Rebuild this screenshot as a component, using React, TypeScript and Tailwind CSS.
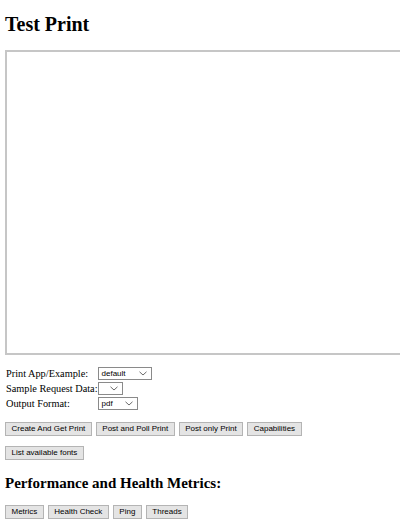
import React from 'react';

const serif = "font-['Liberation_Serif',serif]";

function Btn({ children }: { children: React.ReactNode }) {
  return (
    <button
      type="button"
      className="h-[14px] px-[5.5px] bg-[#e4e4e4] border border-[#b4b4b4] text-[8px] leading-[12px] text-black font-['Liberation_Sans',sans-serif] whitespace-nowrap"
    >
      {children}
    </button>
  );
}

function Select({ value, width }: { value: string; width: string }) {
  return (
    <div
      className={`${width} h-[13px] flex items-center justify-between pl-[3px] pr-[4px] border border-[#8a8a8a] bg-white text-[8px] leading-[11px] font-['Liberation_Sans',sans-serif]`}
    >
      <span>{value}</span>
      <svg width="8" height="5" viewBox="0 0 8 5" fill="none" stroke="#444" strokeWidth="0.8">
        <path d="M0.5 0.8 L4 4 L7.5 0.8" />
      </svg>
    </div>
  );
}

export default function App() {
  return (
    <div className={`overflow-hidden h-[532px] px-[5px] ${serif} text-black bg-white`}>
      <h1 className="pt-[13px] text-[20px] leading-[23px] font-bold">Test Print</h1>

      <div className="mt-[14px] h-[305px] w-[420px] border-2 border-[#c6c6c6] bg-white" />

      <div className="mt-[12px] grid grid-cols-[auto_auto] justify-start items-center gap-y-[2px] text-[10.3px] leading-[13px]">
        <span className="pl-[1px]">Print App/Example:</span>
        <Select value="default" width="w-[54px]" />
        <span className="pl-[1px]">Sample Request Data:</span>
        <Select value="" width="w-[25px]" />
        <span className="pl-[1px]">Output Format:</span>
        <Select value="pdf" width="w-[40px]" />
      </div>

      <div className="mt-[12px] flex gap-[4px]">
        <Btn>Create And Get Print</Btn>
        <Btn>Post and Poll Print</Btn>
        <Btn>Post only Print</Btn>
        <Btn>Capabilities</Btn>
      </div>

      <div className="mt-[10px] flex">
        <Btn>List available fonts</Btn>
      </div>

      <h2 className="mt-[15px] text-[15px] leading-[17px] font-bold">Performance and Health Metrics:</h2>

      <div className="mt-[13px] flex gap-[4px]">
        <Btn>Metrics</Btn>
        <Btn>Health Check</Btn>
        <Btn>Ping</Btn>
        <Btn>Threads</Btn>
      </div>
    </div>
  );
}
